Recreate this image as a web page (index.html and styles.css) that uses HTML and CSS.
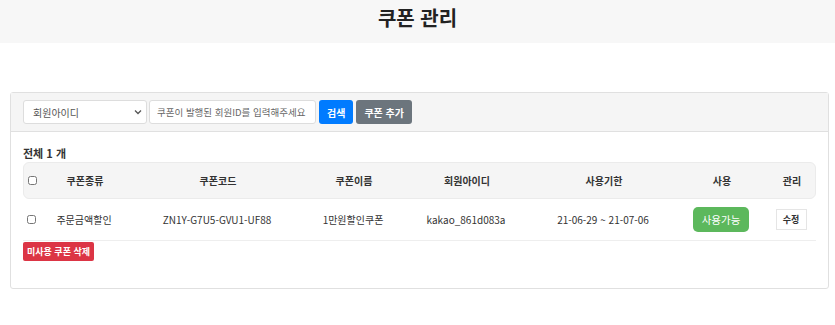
FILE: index.html
```html
<!DOCTYPE html>
<html lang="ko">
    <head>
        <meta charset="utf-8">
        <link rel="stylesheet" href="styles.css">
    </head>
    <body>
        <div class="topbar">
            <h1>쿠폰 관리</h1>
        </div>
        <div class="card">
            <div class="card_head">
                <span class="selwrap">
                    <select class="field sel">
                        <option>회원아이디</option>
                    </select>
                    <svg class="chev" width="8" height="6" viewBox="0 0 8 6"><path d="M1 1.5 L4 4.5 L7 1.5" fill="none" stroke="#555" stroke-width="1.3"/></svg>
                </span>
                <input class="field txt" type="text" placeholder="쿠폰이 발행된 회원ID를 입력해주세요">
                <button class="btn blue">검색</button>
                <button class="btn grey">쿠폰 추가</button>
            </div>
            <div class="card_body">
                <div class="total">전체 1 개</div>
                <div class="tbl">
                    <div class="row head">
                        <div class="cell"><input type="checkbox"></div>
                        <div class="cell">쿠폰종류</div>
                        <div class="cell">쿠폰코드</div>
                        <div class="cell">쿠폰이름</div>
                        <div class="cell">회원아이디</div>
                        <div class="cell">사용기한</div>
                        <div class="cell">사용</div>
                        <div class="cell">관리</div>
                    </div>
                    <div class="row data">
                        <div class="cell"><input type="checkbox"></div>
                        <div class="cell">주문금액할인</div>
                        <div class="cell">ZN1Y-G7U5-GVU1-UF88</div>
                        <div class="cell">1만원할인쿠폰</div>
                        <div class="cell">kakao_861d083a</div>
                        <div class="cell">21-06-29 ~ 21-07-06</div>
                        <div class="cell"><span class="badge">사용가능</span></div>
                        <div class="cell"><button class="edit">수정</button></div>
                    </div>
                </div>
                <button class="btn red">미사용 쿠폰 삭제</button>
            </div>
        </div>
    </body>
</html>
```

FILE: styles.css
```css
body{
    margin: 0;
    font-family: "Noto Sans CJK KR", "Noto Sans", sans-serif;
    color: #333;
    font-size: 10px;
}
div.topbar{
    height: 43px;
    background-color: #f7f7f7;
}
div.topbar h1{
    margin: 0;
    text-align: center;
    font-size: 20px;
    line-height: 35px;
    font-weight: bold;
    color: #222;
}
div.card{
    margin: 49px 6px 0 10px;
    border: 1px solid #e0e0e0;
    border-radius: 3px;
}
div.card_head{
    display: flex;
    align-items: center;
    height: 38px;
    padding: 0 12px;
    background-color: #f5f5f5;
    border-bottom: 1px solid #e0e0e0;
}
span.selwrap{
    position: relative;
    display: flex;
    margin-right: 2px;
}
svg.chev{
    position: absolute;
    right: 5px;
    top: 9px;
    pointer-events: none;
}
.field{
    box-sizing: border-box;
    height: 24px;
    border: 1px solid #ddd;
    border-radius: 3px;
    background: #fff;
    font-family: inherit;
    font-size: 10px;
    color: #555;
}
.sel{
    width: 124px;
    padding: 0 9px;
    appearance: none;
    -webkit-appearance: none;
}
.txt{
    width: 167px;
    padding: 0 7px;
    font-size: 9.5px;
    margin-right: 3px;
}
.txt::placeholder{
    color: #666;
}
.btn{
    height: 24px;
    border: none;
    border-radius: 3px;
    color: #fff;
    font-family: inherit;
    font-size: 10px;
    font-weight: bold;
    padding: 0 8px;
}
.blue{
    background-color: #007bff;
    margin-right: 3px;
}
.grey{
    background-color: #6c757d;
}
.red{
    background-color: #dc3545;
    height: 19px;
    padding: 0 4px;
    border-radius: 2px;
    font-size: 9px;
    margin-top: 1px;
}
div.card_body{
    padding: 13px 12px 27px 12px;
}
div.total{
    font-weight: bold;
    font-size: 11px;
    line-height: 16px;
    margin-bottom: 1px;
}
div.row{
    display: grid;
    grid-template-columns: 14px 94px 172px 100px 126px 148px 88px 52px;
    align-items: center;
    text-align: center;
}
div.row.head{
    height: 35px;
    background-color: #f5f5f5;
    border: 1px solid #ebebeb;
    border-radius: 6px;
    font-weight: bold;
}
div.row.data{
    height: 41px;
    border-bottom: 1px solid #eee;
}
div.cell input{
    display: block;
    margin: 0 0 0 4px;
    width: 9px;
    height: 9px;
}
span.badge{
    display: inline-block;
    width: 56px;
    height: 25px;
    line-height: 25px;
    border-radius: 5px;
    background-color: #5cb85c;
    color: #fff;
    font-size: 10.5px;
}
button.edit{
    width: 31px;
    height: 21px;
    padding: 0;
    border: 1px solid #e5e5e5;
    background: #fff;
    font-family: inherit;
    font-size: 9px;
    font-weight: bold;
    color: #333;
}
```
